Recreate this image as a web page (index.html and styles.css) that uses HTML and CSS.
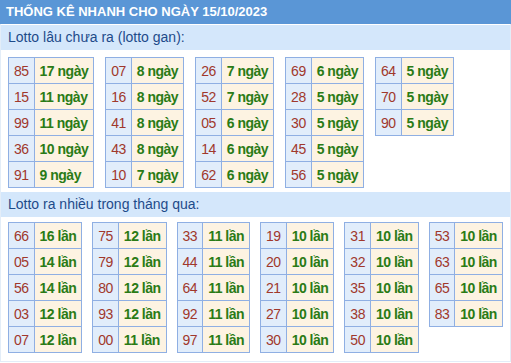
FILE: index.html
```html
<!DOCTYPE html>
<html lang="vi">
<head>
<meta charset="utf-8">
<title>Thống kê nhanh</title>
<link rel="stylesheet" href="styles.css">
</head>
<body>
<div class="panel">
  <div class="title">THỐNG KÊ NHANH CHO NGÀY 15/10/2023</div>
  <div class="heading">Lotto lâu chưa ra (lotto gan):</div>
  <div class="tables top">
    <table><tr><td class="n">85</td><td class="v">17 ngày</td></tr><tr><td class="n">15</td><td class="v">11 ngày</td></tr><tr><td class="n">99</td><td class="v">11 ngày</td></tr><tr><td class="n">36</td><td class="v">10 ngày</td></tr><tr><td class="n">91</td><td class="v">9 ngày</td></tr></table>
    <table><tr><td class="n">07</td><td class="v">8 ngày</td></tr><tr><td class="n">16</td><td class="v">8 ngày</td></tr><tr><td class="n">41</td><td class="v">8 ngày</td></tr><tr><td class="n">43</td><td class="v">8 ngày</td></tr><tr><td class="n">10</td><td class="v">7 ngày</td></tr></table>
    <table><tr><td class="n">26</td><td class="v">7 ngày</td></tr><tr><td class="n">52</td><td class="v">7 ngày</td></tr><tr><td class="n">05</td><td class="v">6 ngày</td></tr><tr><td class="n">14</td><td class="v">6 ngày</td></tr><tr><td class="n">62</td><td class="v">6 ngày</td></tr></table>
    <table><tr><td class="n">69</td><td class="v">6 ngày</td></tr><tr><td class="n">28</td><td class="v">5 ngày</td></tr><tr><td class="n">30</td><td class="v">5 ngày</td></tr><tr><td class="n">45</td><td class="v">5 ngày</td></tr><tr><td class="n">56</td><td class="v">5 ngày</td></tr></table>
    <table><tr><td class="n">64</td><td class="v">5 ngày</td></tr><tr><td class="n">70</td><td class="v">5 ngày</td></tr><tr><td class="n">90</td><td class="v">5 ngày</td></tr></table>
  </div>
  <div class="heading">Lotto ra nhiều trong tháng qua:</div>
  <div class="tables bottom">
    <table><tr><td class="n">66</td><td class="v">16 lần</td></tr><tr><td class="n">05</td><td class="v">14 lần</td></tr><tr><td class="n">56</td><td class="v">14 lần</td></tr><tr><td class="n">03</td><td class="v">12 lần</td></tr><tr><td class="n">07</td><td class="v">12 lần</td></tr></table>
    <table><tr><td class="n">75</td><td class="v">12 lần</td></tr><tr><td class="n">79</td><td class="v">12 lần</td></tr><tr><td class="n">80</td><td class="v">12 lần</td></tr><tr><td class="n">93</td><td class="v">12 lần</td></tr><tr><td class="n">00</td><td class="v">11 lần</td></tr></table>
    <table><tr><td class="n">33</td><td class="v">11 lần</td></tr><tr><td class="n">44</td><td class="v">11 lần</td></tr><tr><td class="n">64</td><td class="v">11 lần</td></tr><tr><td class="n">92</td><td class="v">11 lần</td></tr><tr><td class="n">97</td><td class="v">11 lần</td></tr></table>
    <table><tr><td class="n">19</td><td class="v">10 lần</td></tr><tr><td class="n">20</td><td class="v">10 lần</td></tr><tr><td class="n">21</td><td class="v">10 lần</td></tr><tr><td class="n">27</td><td class="v">10 lần</td></tr><tr><td class="n">30</td><td class="v">10 lần</td></tr></table>
    <table><tr><td class="n">31</td><td class="v">10 lần</td></tr><tr><td class="n">32</td><td class="v">10 lần</td></tr><tr><td class="n">35</td><td class="v">10 lần</td></tr><tr><td class="n">38</td><td class="v">10 lần</td></tr><tr><td class="n">50</td><td class="v">10 lần</td></tr></table>
    <table><tr><td class="n">53</td><td class="v">10 lần</td></tr><tr><td class="n">63</td><td class="v">10 lần</td></tr><tr><td class="n">65</td><td class="v">10 lần</td></tr><tr><td class="n">83</td><td class="v">10 lần</td></tr></table>
  </div>
</div>
</body>
</html>
```

FILE: styles.css
```css
* { box-sizing: border-box; }
html, body { margin: 0; padding: 0; background: #ffffff; }
body { font-family: "Liberation Sans", Arial, sans-serif; }

.panel {
  width: 511px;
  padding-bottom: 8px;
  border-left: 1px solid #e3edf8;
  border-right: 1px solid #e3edf8;
  border-bottom: 1px solid #e3edf8;
}

.title {
  height: 24px;
  line-height: 24px;
  background: #5a96d6;
  color: #ffffff;
  font-size: 13px;
  font-weight: bold;
  padding-left: 6px;
  margin: 0 -1px 1px;
}

.heading {
  height: 25px;
  line-height: 25px;
  background: #d4e7fb;
  color: #1e4b8a;
  font-size: 14px;
  padding-left: 7px;
}

.tables {
  display: flex;
  align-items: flex-start;
  padding-left: 7px;
}
.tables.top { gap: 11px; margin: 7px 0 4px; }
.tables.bottom { gap: 10px; margin: 5px 0 0; }

table {
  border-collapse: collapse;
  font-size: 14px;
  letter-spacing: -0.5px;
}
td {
  height: 26px;
  padding: 0 5px;
  border: 1px solid #8fafe3;
  white-space: nowrap;
}
td.n {
  background: #e1edfb;
  color: #a0382c;
  text-align: center;
}
td.v {
  background: #fdf3e2;
  color: #2a7b16;
  font-weight: bold;
}
```
